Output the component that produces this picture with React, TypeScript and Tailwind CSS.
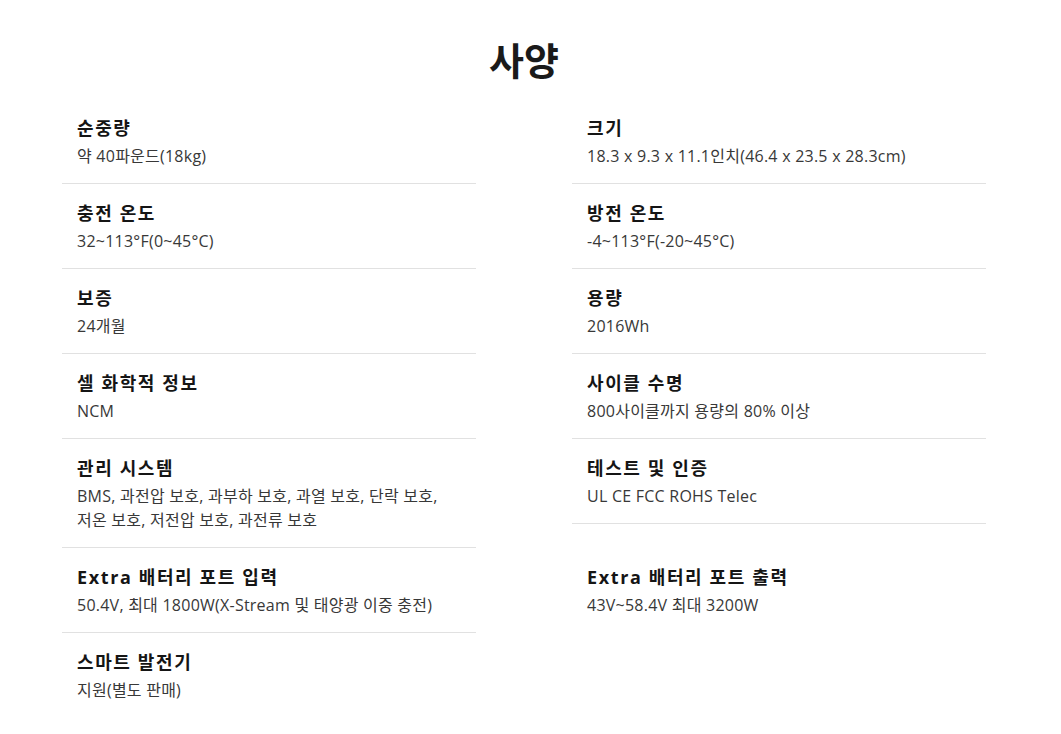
import React from "react";

type Spec = { label: string; value: string[]; border: boolean };

const LEFT: Spec[] = [
  { label: "순중량", value: ["약 40파운드(18kg)"], border: true },
  { label: "충전 온도", value: ["32~113°F(0~45°C)"], border: true },
  { label: "보증", value: ["24개월"], border: true },
  { label: "셀 화학적 정보", value: ["NCM"], border: true },
  { label: "관리 시스템", value: ["BMS, 과전압 보호, 과부하 보호, 과열 보호, 단락 보호,", "저온 보호, 저전압 보호, 과전류 보호"], border: true },
  { label: "Extra 배터리 포트 입력", value: ["50.4V, 최대 1800W(X-Stream 및 태양광 이중 충전)"], border: true },
  { label: "스마트 발전기", value: ["지원(별도 판매)"], border: false },
];

const RIGHT: Spec[] = [
  { label: "크기", value: ["18.3 x 9.3 x 11.1인치(46.4 x 23.5 x 28.3cm)"], border: true },
  { label: "방전 온도", value: ["-4~113°F(-20~45°C)"], border: true },
  { label: "용량", value: ["2016Wh"], border: true },
  { label: "사이클 수명", value: ["800사이클까지 용량의 80% 이상"], border: true },
  { label: "테스트 및 인증", value: ["UL CE FCC ROHS Telec"], border: true },
  { label: "Extra 배터리 포트 출력", value: ["43V~58.4V 최대 3200W"], border: false },
];

const SpecCell: React.FC<{ spec: Spec }> = ({ spec }) => (
  <div className={`px-[15px] pt-[16px] pb-[15px] self-start ${spec.border ? "border-b border-[#e1e1e1]" : ""}`}>
    <h3 className="h-[26px] text-[18px] leading-[26px] font-bold text-[#151515] tracking-[0.09em]">{spec.label}</h3>
    <div className="mt-[3px] text-[16px] text-[#383838] tracking-[0.015em]">
      {spec.value.map((line) => (
        <p key={line} className="h-[24px] leading-[24px] whitespace-nowrap">
          {line}
        </p>
      ))}
    </div>
  </div>
);

const App: React.FC = () => {
  const rows = Math.max(LEFT.length, RIGHT.length);
  const cells: React.ReactNode[] = [];
  for (let i = 0; i < rows; i++) {
    cells.push(LEFT[i] ? <SpecCell key={`l${i}`} spec={LEFT[i]} /> : <div key={`l${i}`} />);
    cells.push(RIGHT[i] ? <SpecCell key={`r${i}`} spec={RIGHT[i]} /> : <div key={`r${i}`} />);
  }

  return (
    <div
      className="min-h-screen bg-white pb-6"
      style={{ fontFamily: '"Open Sans", "Noto Sans CJK KR", sans-serif' }}
    >
      <div className="ml-[62px] w-[924px]">
        <h1 className="pt-[38px] h-[82px] text-center text-[38px] leading-[44px] font-bold text-[#1a1a1a]">사양</h1>
        <div className="mt-[17px] grid grid-cols-[414px_414px] gap-x-[96px]">{cells}</div>
      </div>
    </div>
  );
};

export default App;
